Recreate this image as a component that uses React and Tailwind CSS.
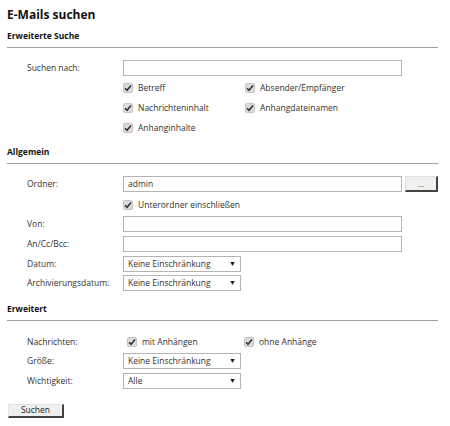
import React from "react";

const font = { fontFamily: '"Open Sans", "Noto Sans", sans-serif' };

function Check({ label, className = "" }) {
  return (
    <div className={`flex items-center h-[20px] ${className}`}>
      <span className="w-[10px] h-[10px] rounded-[2px] bg-[#dcdcdc] border border-[#c4c4c4] flex items-center justify-center shrink-0">
        <svg width="8" height="8" viewBox="0 0 8 8">
          <path d="M1 4.2 L3 6.2 L7 1.5" fill="none" stroke="#333" strokeWidth="1.6" />
        </svg>
      </span>
      <span className="ml-[5px] text-[8.5px] text-[#333] whitespace-nowrap">{label}</span>
    </div>
  );
}

function Heading({ children, mt }) {
  return (
    <div className={mt}>
      <div className="text-[8.5px] font-bold text-[#111] leading-[12px]">{children}</div>
      <div className="mt-[5px] h-px bg-[#a0a0a0] w-[431px]" />
    </div>
  );
}

function Row({ label, children, className = "" }) {
  return (
    <div className={`flex items-center ${className}`}>
      <div className="w-[116px] pl-[20px] text-[8.5px] text-[#333] shrink-0">{label}</div>
      <div className="flex items-center">{children}</div>
    </div>
  );
}

function TextInput({ value = "" }) {
  return (
    <div className="w-[279px] h-[16px] border border-[#b4b4b4] bg-white text-[8.5px] text-[#333] pl-[4px] leading-[14px]">
      {value}
    </div>
  );
}

function Select({ value }) {
  return (
    <div className="w-[118px] h-[16px] border border-[#b4b4b4] bg-white text-[8.5px] text-[#333] pl-[4px] pr-[4px] flex items-center justify-between">
      <span>{value}</span>
      <span className="text-[7px] text-[#111]">▼</span>
    </div>
  );
}

export default function App() {
  return (
    <div className="w-[450px] h-[426px] bg-white pl-[7px] pt-[6px]" style={font}>
      <div className="text-[12px] font-bold text-[#111] leading-[18px]">E-Mails suchen</div>

      <Heading mt="mt-[6px]">Erweiterte Suche</Heading>

      <Row label="Suchen nach:" className="mt-[12px]">
        <TextInput />
      </Row>
      <div className="ml-[116px] mt-[2px] flex">
        <div className="w-[122px]">
          <Check label="Betreff" />
          <Check label="Nachrichteninhalt" />
          <Check label="Anhanginhalte" />
        </div>
        <div>
          <Check label="Absender/Empfänger" />
          <Check label="Anhangdateinamen" />
        </div>
      </div>

      <Heading mt="mt-[8px]">Allgemein</Heading>

      <Row label="Ordner:" className="mt-[12px]">
        <TextInput value="admin" />
        <div className="ml-[3px] w-[33px] h-[16px] bg-[#f0f0f0] border-t border-l border-[#e0e0e0] border-r-2 border-b-2 border-r-[#444] border-b-[#444] text-[8px] text-[#444] flex items-center justify-center leading-none">
          ...
        </div>
      </Row>
      <div className="ml-[116px] mt-[3px]">
        <Check label="Unterordner einschließen" />
      </div>
      <Row label="Von:" className="mt-[1px]">
        <TextInput />
      </Row>
      <Row label="An/Cc/Bcc:" className="mt-[4px]">
        <TextInput />
      </Row>
      <Row label="Datum:" className="mt-[4px]">
        <Select value="Keine Einschränkung" />
      </Row>
      <Row label="Archivierungsdatum:" className="mt-[3px]">
        <Select value="Keine Einschränkung" />
      </Row>

      <Heading mt="mt-[12px]">Erweitert</Heading>

      <Row label="Nachrichten:" className="mt-[11px]">
        <div className="flex">
          <Check label="mit Anhängen" className="w-[121px] pl-[4px]" />
          <Check label="ohne Anhänge" />
        </div>
      </Row>
      <Row label="Größe:" className="mt-[1px]">
        <Select value="Keine Einschränkung" />
      </Row>
      <Row label="Wichtigkeit:" className="mt-[4px]">
        <Select value="Alle" />
      </Row>

      <div className="mt-[15px] ml-[1px] w-[56px] h-[14px] bg-[#efefef] border-t border-l border-[#e4e4e4] border-r-2 border-b-2 border-r-[#444] border-b-[#444] text-[8.5px] text-[#222] flex items-center justify-center">
        Suchen
      </div>
    </div>
  );
}
